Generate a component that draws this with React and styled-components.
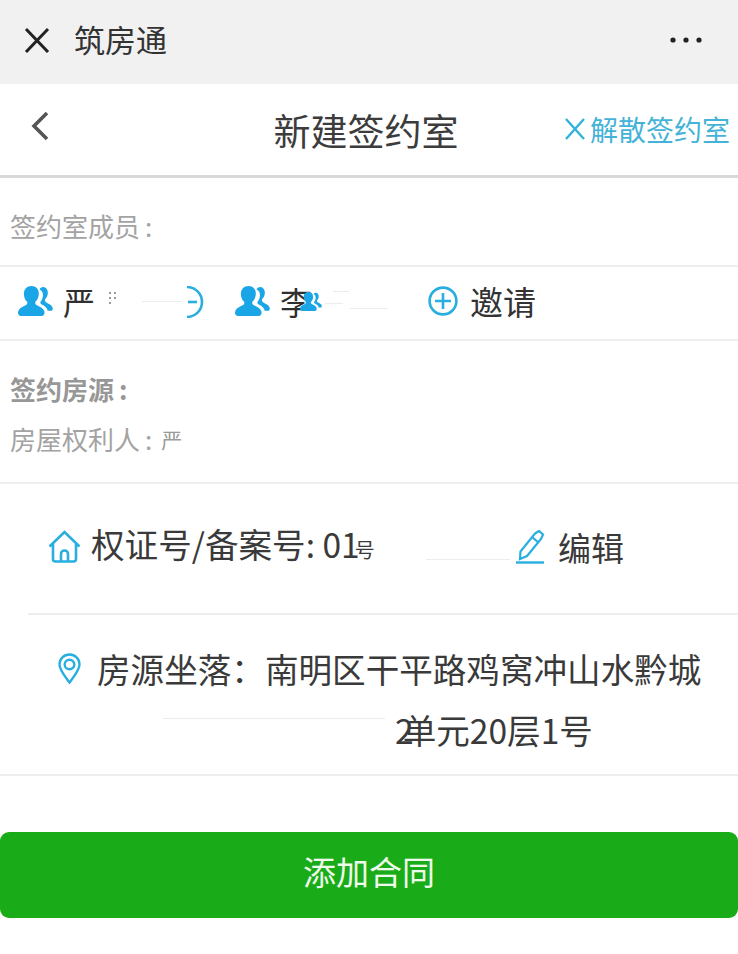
import React from "react";
import styled, { createGlobalStyle } from "styled-components";

const blue = "#29aee0";

const GlobalStyle = createGlobalStyle`
  html, body {
    margin: 0;
    padding: 0;
    background: #fff;
    font-family: "Noto Sans CJK SC", "Noto Sans", sans-serif;
  }
`;

const Page = styled.div`
  width: 738px;
  height: 954px;
  overflow: hidden;
  display: flex;
  flex-direction: column;
  color: #3a3a3a;
`;

const WechatBar = styled.div`
  height: 84px;
  background: #f1f1f1;
  display: flex;
  align-items: center;
  padding: 0 36px 4px 24px;
  box-sizing: border-box;
`;

const BarTitle = styled.div`
  font-size: 31px;
  margin: -4px 0 0 24px;
  flex: 1;
  color: #333;
`;

const Header = styled.div`
  height: 94px;
  box-sizing: border-box;
  border-bottom: 3px solid #d9d9d9;
  display: grid;
  grid-template-columns: 1fr auto 1fr;
  align-items: center;
  padding-left: 30px;
  padding-right: 8px;
`;

const Back = styled.svg`
  width: 20px;
  height: 30px;
  margin-top: -8px;
`;

const Title = styled.div`
  font-size: 37px;
  line-height: 50px;
  margin-left: -28px;
  color: #3c3c3c;
`;

const Dissolve = styled.div`
  justify-self: end;
  display: flex;
  align-items: center;
  gap: 5px;
  font-size: 28px;
  line-height: 40px;
  color: #45b3d8;
  margin-top: -2px;
`;

const Label = styled.div`
  font-size: 26px;
  line-height: 34px;
  color: ${p => (p.$bold ? "#979797" : "#a3a3a3")};
  font-weight: ${p => (p.$bold ? 700 : 400)};
`;

const Colon = styled.span`
  margin-left: 5px;
`;

const LabelRow = styled.div`
  height: 89px;
  box-sizing: border-box;
  border-bottom: 2px solid #eeeeee;
  padding: 31px 0 0 10px;
`;

const MemberRow = styled.div`
  height: 74px;
  box-sizing: border-box;
  border-bottom: 2px solid #eeeeee;
  display: flex;
  align-items: center;
  padding-left: 18px;
  padding-bottom: 4px;
`;

const Member = styled.div`
  position: relative;
  display: flex;
  align-items: center;
  width: ${p => p.$width}px;
`;

const Name = styled.span`
  font-size: 32px;
  line-height: 44px;
  margin-left: 10px;
  color: #2f2f2f;
`;

const Smudge = styled.div`
  position: absolute;
  left: ${p => p.$left}px;
  top: ${p => p.$top}px;
  width: ${p => p.$width}px;
  height: 1px;
  background: #ececec;
`;

const Overlay = styled.div`
  position: absolute;
  left: ${p => p.$left}px;
  top: ${p => p.$top}px;
  display: flex;
`;

const Invite = styled.div`
  display: flex;
  align-items: center;
  gap: 12px;
  font-size: 33px;
  line-height: 44px;
  color: #333;
  margin-left: 2px;
`;

const SourceBlock = styled.div`
  height: 143px;
  box-sizing: border-box;
  border-bottom: 2px solid #eeeeee;
  padding: 31px 0 0 10px;
  display: flex;
  flex-direction: column;
  gap: 16px;
`;

const Owner = styled.div`
  display: flex;
  align-items: center;
  gap: 9px;
`;

const OwnerInitial = styled.span`
  font-size: 21px;
  line-height: 34px;
  color: #9a9a9a;
`;

const CertRow = styled.div`
  position: relative;
  height: 131px;
  margin-left: 28px;
  box-sizing: border-box;
  border-bottom: 2px solid #eeeeee;
  display: flex;
  align-items: center;
  padding: 0 0 4px 20px;
  font-size: 33px;
`;

const CertText = styled.div`
  margin-left: 10px;
  width: 423px;
  font-size: 33.6px;
  line-height: 44px;
  white-space: nowrap;
  color: #3a3a3a;
`;

const CertEnd = styled.span`
  font-size: 20px;
  margin-left: -5px;
`;

const EditText = styled.div`
  margin-left: 12px;
  line-height: 44px;
`;

const AddressBlock = styled.div`
  height: 161px;
  box-sizing: border-box;
  border-bottom: 2px solid #eeeeee;
  padding: 23px 0 0 58px;
  font-size: 33.6px;
  line-height: 61px;
  color: #3a3a3a;
`;

const AddressLine = styled.div`
  position: relative;
  display: flex;
  align-items: center;
  gap: 16px;
  white-space: nowrap;
`;

const AddressEnd = styled.div`
  position: relative;
  padding-left: 337px;
  white-space: nowrap;
`;

const Digit = styled.span`
  margin-right: -11px;
`;

const Footer = styled.div`
  padding-top: 56px;
`;

const AddButton = styled.button`
  display: block;
  width: 100%;
  height: 86px;
  border: 0;
  padding: 0 0 8px;
  border-radius: 9px;
  background: #1aab19;
  color: #eefbea;
  font-family: inherit;
  font-size: 33px;
`;

const People = ({ size = 35 }) => (
  <svg width={size} height={size * 0.86} viewBox="0 0 35 30">
    <path
      fill="#1aa6e6"
      d="M21.5 3.2c1.4-2 3.6-2.6 5.4-1.8 3 1.3 3.6 5.3 2.4 8.4-.5 1.4-1.3 2.6-2.2 3.4-.5 1.6.1 2.7 1.6 3.4 2.4 1.2 5.4 2.3 6 5.3.2 1.2-.2 2.4-1.2 2.9h-3.8c-.5-3.4-3.2-5-6-6.4-1-.5-1.5-1.2-1.3-2.4 1.6-2 2.6-4.5 2.5-7.5 0-2-.9-3.8-3.4-5.3z"
    />
    <path
      fill="#1aa6e6"
      d="M13.5 0c4.8 0 7.6 3.6 7.3 8.2-.2 3.2-1.6 6-3.4 7.5-.4 1.8.3 2.9 2 3.8 3 1.5 6.5 3 7.1 6.3.3 1.9-.6 3.8-2.6 4.2H2.7C.7 29.6-.3 27.8.1 25.8c.6-3.3 4-4.8 7-6.3 1.8-.9 2.5-2 2.1-3.8C7.3 14.2 6 11.4 5.9 8.2 5.7 3.6 8.7 0 13.5 0z"
    />
  </svg>
);

export default function App() {
  return (
    <Page>
      <GlobalStyle />
      <WechatBar>
        <svg width="26" height="26" viewBox="0 0 26 26">
          <path d="M2 2l22 23M24 2L2 25" stroke="#222" strokeWidth="3" fill="none" />
        </svg>
        <BarTitle>筑房通</BarTitle>
        <svg width="32" height="6" viewBox="0 0 32 6">
          <circle cx="3" cy="3" r="2.6" fill="#222" />
          <circle cx="16" cy="3" r="2.6" fill="#222" />
          <circle cx="29" cy="3" r="2.6" fill="#222" />
        </svg>
      </WechatBar>

      <Header>
        <Back viewBox="0 0 20 30">
          <path d="M17 2L4 15l13 13" stroke="#555" strokeWidth="3.6" fill="none" />
        </Back>
        <Title>新建签约室</Title>
        <Dissolve>
          <svg width="20" height="22" viewBox="0 0 20 22">
            <path d="M1 1l18 20M19 1L1 21" stroke="#2fb2dc" strokeWidth="2.4" fill="none" />
          </svg>
          解散签约室
        </Dissolve>
      </Header>

      <LabelRow>
        <Label>签约室成员<Colon>:</Colon></Label>
      </LabelRow>

      <MemberRow>
        <Member $width={217}>
          <People />
          <Name>严</Name>
          <Overlay $left={90} $top={12}>
            <svg width="8" height="14" viewBox="0 0 8 14">
              <path d="M1 2h2M6 2h2M1 7h2M6 7h2M1 12h2" stroke="#9a9a9a" strokeWidth="2" />
            </svg>
          </Overlay>
          <Smudge $left={124} $top={22} $width={40} />
          <Overlay $left={167} $top={7}>
            <svg width="20" height="32" viewBox="0 0 20 32">
              <path d="M2 1a15 15 0 0 1 0 30" stroke={blue} strokeWidth="2.6" fill="none" />
              <path d="M3 16h9" stroke={blue} strokeWidth="2.6" />
            </svg>
          </Overlay>
        </Member>
        <Member $width={191}>
          <People />
          <Name>李</Name>
          <Overlay $left={65} $top={13}>
            <People size={22} />
          </Overlay>
          <Smudge $left={98} $top={12} $width={16} />
          <Smudge $left={90} $top={24} $width={18} />
          <Smudge $left={115} $top={29} $width={38} />
        </Member>
        <Invite>
          <svg width="30" height="30" viewBox="0 0 30 30">
            <circle cx="15" cy="15" r="13.4" stroke={blue} strokeWidth="2.6" fill="none" />
            <path d="M15 7v16M7 15h16" stroke={blue} strokeWidth="2.6" />
          </svg>
          邀请
        </Invite>
      </MemberRow>

      <SourceBlock>
        <Label $bold>签约房源<Colon>:</Colon></Label>
        <Owner>
          <Label>房屋权利人<Colon>:</Colon></Label>
          <OwnerInitial>严</OwnerInitial>
        </Owner>
      </SourceBlock>

      <CertRow>
        <svg width="33" height="33" viewBox="0 0 33 33">
          <path
            d="M1.5 16.5L16.5 2l15 14.5M5 14v15a2.5 2.5 0 0 0 2.5 2.5h18a2.5 2.5 0 0 0 2.5-2.5V14M13 31v-7a3.5 3.5 0 0 1 7 0v7"
            stroke={blue}
            strokeWidth="2.6"
            fill="none"
          />
        </svg>
        <CertText>权证号/备案号: 01<CertEnd>号</CertEnd></CertText>
        <svg width="32" height="34" viewBox="0 0 32 34">
          <path
            d="M21 3.5l4-2.5 4 3.5-2 4.5L13 26l-7 3 .5-7.5zM18 7l7 6"
            stroke={blue}
            strokeWidth="2.2"
            fill="none"
          />
          <path d="M2 32.5h28" stroke={blue} strokeWidth="2.4" />
        </svg>
        <EditText>编辑</EditText>
        <Smudge $left={398} $top={75} $width={84} />
      </CertRow>

      <AddressBlock>
        <AddressLine>
          <svg width="23" height="31" viewBox="0 0 23 31">
            <path
              d="M11.5 29.5C6 22 1.5 17 1.5 11.5a10 10 0 0 1 20 0c0 5.5-4.5 10.5-10 18z"
              stroke={blue}
              strokeWidth="2.4"
              fill="none"
            />
            <circle cx="11.5" cy="11.5" r="4.8" stroke={blue} strokeWidth="2.4" fill="none" />
          </svg>
          房源坐落：南明区干平路鸡窝冲山水黔城
        </AddressLine>
        <AddressEnd>
          <Smudge $left={105} $top={19} $width={222} />
          <Digit>2</Digit>单元20层1号
        </AddressEnd>
      </AddressBlock>

      <Footer>
        <AddButton>添加合同</AddButton>
      </Footer>
    </Page>
  );
}
